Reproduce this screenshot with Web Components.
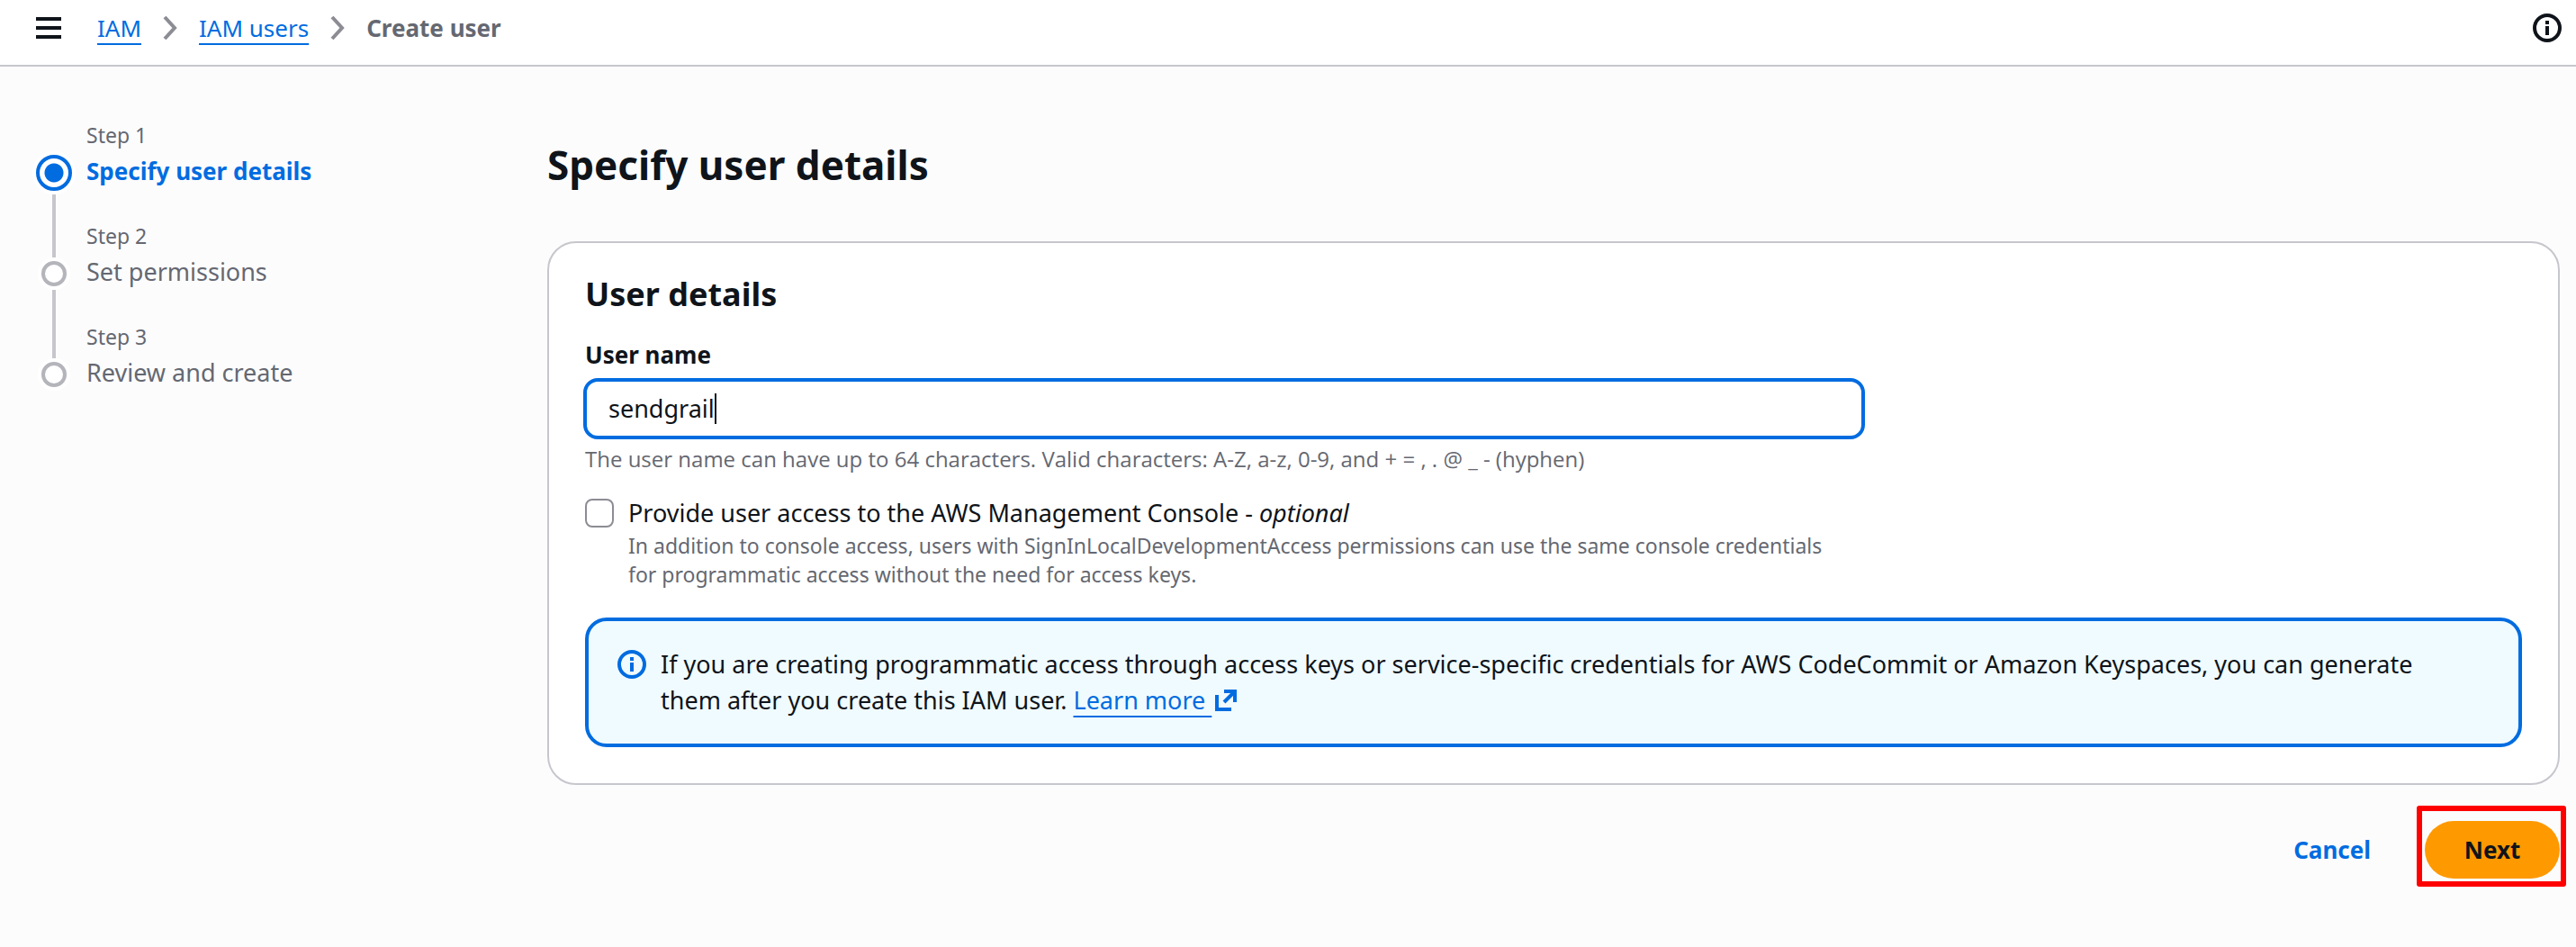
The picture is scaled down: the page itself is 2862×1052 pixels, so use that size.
<!DOCTYPE html>
<html lang="en">
<head>
<meta charset="utf-8">
<title>Create user</title>
<style>
  :root {
    --link: #006ce0;
    --text: #0f141a;
    --muted: #656871;
    --divider: #c6c6cd;
    --body-size: 27px;
    --strong-size: 26px;
    --small-size: 23px;
  }
  body {
    margin: 0;
    min-height: 100vh;
    background: #fcfcfd;
    color: var(--text);
    font: 400 var(--body-size)/40px "Noto Sans", "Open Sans", sans-serif;
  }
</style>
</head>
<body>
<iam-create-user></iam-create-user>

<script>
const define = (name, html) => {
  const template = document.createElement('template');
  template.innerHTML = html;
  customElements.define(name, class extends HTMLElement {
    connectedCallback() {
      if (this.shadowRoot) return;
      this.attachShadow({ mode: 'open' }).append(template.content.cloneNode(true));
    }
  });
};

define('icon-info', `
  <style>
    :host { display: block; flex: none; width: 32px; height: 32px; }
    svg { display: block; width: 100%; height: 100%; }
  </style>
  <svg viewBox="0 0 16 16" fill="none" stroke="currentColor" stroke-width="2" aria-hidden="true">
    <circle cx="8" cy="8" r="7"/><path d="M8 4v2M8 7v5"/>
  </svg>`);

define('icon-external', `
  <style>
    :host { display: inline-block; width: 24px; height: 24px; vertical-align: -2px; }
    svg { display: block; width: 100%; height: 100%; }
  </style>
  <svg viewBox="0 0 24 24" fill="none" stroke="currentColor" stroke-width="4" aria-hidden="true">
    <path d="M10 2h12v12M22 2L10 14M2 6v16h16"/>
  </svg>`);

define('app-breadcrumbs', `
  <style>
    :host { display: block; }
    ol { display: flex; align-items: center; margin: 0; padding: 0; list-style: none; font-size: var(--strong-size); }
    li { display: flex; align-items: center; }
    a { color: var(--link); text-decoration: underline 2px; text-underline-offset: 7px; }
    span { color: var(--muted); font-weight: 700; }
    svg { width: 16px; height: 26px; margin: 0 24px; fill: none; stroke: #8c8c94; stroke-width: 4; }
  </style>
  <nav aria-label="Breadcrumbs"><ol>
    <li><a href="#iam">IAM</a><svg viewBox="0 0 16 26" aria-hidden="true"><path d="M2 1l11 12L2 25"/></svg></li>
    <li><a href="#users">IAM users</a><svg viewBox="0 0 16 26" aria-hidden="true"><path d="M2 1l11 12L2 25"/></svg></li>
    <li><span aria-current="page">Create user</span></li>
  </ol></nav>`);

define('app-topbar', `
  <style>
    :host { display: flex; align-items: center; gap: 40px; padding: 11px 16px 21px 40px; background: #fff; border-bottom: 2px solid var(--divider); }
    button { display: block; padding: 0; border: 0; background: none; color: var(--text); }
    .menu svg { display: block; width: 28px; height: 24px; }
    .info { margin-left: auto; }
  </style>
  <button class="menu" type="button" aria-label="Open navigation">
    <svg viewBox="0 0 28 24" fill="none" stroke="currentColor" stroke-width="4"><path d="M0 2h28M0 12h28M0 22h28"/></svg>
  </button>
  <app-breadcrumbs></app-breadcrumbs>
  <button class="info" type="button" aria-label="Info"><icon-info></icon-info></button>`);

define('wizard-step', `
  <style>
    :host { display: grid; grid-template-columns: 40px 1fr; column-gap: 16px; min-height: 112px; color: var(--muted); }
    .rail { display: flex; flex-direction: column; align-items: center; }
    .rail i { width: 4px; background: var(--divider); }
    .before { height: 40px; }
    .after { flex: 1; }
    .dot { box-sizing: border-box; width: 28px; height: 28px; margin: 4px 0; border: 4px solid #b4b4bb; border-radius: 50%; background: #fff; box-shadow: 0 0 0 4px #fff; }
    .label { font-size: var(--small-size); line-height: 32px; margin-bottom: 4px; }
    .title { font-size: var(--body-size); }
    :host([active]) .title { color: var(--link); font-weight: 700; font-size: var(--strong-size); }
    :host([active]) .dot { width: 40px; height: 40px; border-color: var(--link); background: radial-gradient(circle, var(--link) 10px, #fff 11px); }
    :host([active]) .before { height: 34px; background: none; }
    :host([last]) .after { background: none; }
  </style>
  <div class="rail"><i class="before"></i><b class="dot"></b><i class="after"></i></div>
  <div><div class="label"><slot name="label"></slot></div><div class="title"><slot></slot></div></div>`);

define('wizard-steps', `
  <style>
    :host { display: block; flex: none; box-sizing: border-box; width: 608px; padding: 60px 40px 0; }
  </style>
  <nav aria-label="Steps">
    <wizard-step active><span slot="label">Step 1</span>Specify user details</wizard-step>
    <wizard-step><span slot="label">Step 2</span>Set permissions</wizard-step>
    <wizard-step last><span slot="label">Step 3</span>Review and create</wizard-step>
  </nav>`);

define('user-name-field', `
  <style>
    :host { display: block; }
    label { display: block; font-weight: 700; font-size: var(--strong-size); }
    .box { display: flex; align-items: center; box-sizing: border-box; height: 68px; margin: 6px -2px; padding: 0 24px; border: 4px solid var(--link); border-radius: 16px; background: #fff; }
    input { field-sizing: content; max-width: 100%; padding: 0; border: 0; outline: 0; background: none; color: inherit; font: inherit; }
    .caret { width: 2px; height: 34px; background: var(--text); }
    p { margin: 0; font-size: 24px; line-height: 32px; color: var(--muted); font-family: "Open Sans", "Noto Sans", sans-serif; }
  </style>
  <label for="name">User name</label>
  <div class="box"><input id="name" type="text" value="sendgrail" aria-describedby="hint"><span class="caret"></span></div>
  <p id="hint">The user name can have up to 64 characters. Valid characters: A-Z, a-z, 0-9, and + = , . @ _ - (hyphen)</p>`);

define('console-access-option', `
  <style>
    :host { display: flex; gap: 16px; padding-right: 32px; }
    input { appearance: none; flex: none; box-sizing: border-box; width: 32px; height: 32px; margin: 4px 0; border: 2px solid #8c8c94; border-radius: 8px; background: #fff; }
    label { display: block; }
    p { margin: 0; font-size: var(--small-size); line-height: 32px; color: var(--muted); }
  </style>
  <input id="console" type="checkbox" aria-describedby="about">
  <div>
    <label for="console">Provide user access to the AWS Management Console - <em>optional</em></label>
    <p id="about">In addition to console access, users with SignInLocalDevelopmentAccess permissions can use the same console credentials for programmatic access without the need for access keys.</p>
  </div>`);

define('info-alert', `
  <style>
    :host { display: flex; gap: 16px; padding: 28px 60px 28px 32px; border: 4px solid var(--link); border-radius: 24px; background: #f0fbff; }
    icon-info { margin-top: 4px; color: var(--link); }
  </style>
  <icon-info></icon-info>
  <div><slot></slot></div>`);

define('user-details-card', `
  <style>
    :host { display: block; padding: 32px 40px 40px; border: 2px solid var(--divider); border-radius: 32px; background: #fff; }
    h2 { margin: 0 0 22px; font-size: 36px; line-height: 50px; }
    .form { display: grid; gap: 24px; width: 66%; margin-bottom: 32px; }
    a { display: inline-block; color: var(--link); text-decoration: underline 2px; text-underline-offset: 7px; white-space: nowrap; }
    icon-external { margin-left: 4px; }
  </style>
  <h2>User details</h2>
  <div class="form">
    <user-name-field></user-name-field>
    <console-access-option></console-access-option>
  </div>
  <info-alert><span>If you are creating programmatic access through access keys or service-specific credentials for AWS CodeCommit or Amazon Keyspaces, you can generate them after you create this IAM user.</span> <a href="#learn">Learn more&nbsp;<icon-external></icon-external></a></info-alert>`);

define('wizard-actions', `
  <style>
    :host { display: flex; justify-content: flex-end; gap: 20px; }
    button { height: 64px; padding: 0 40px; border: 0; border-radius: 32px; background: none; color: var(--link); font: inherit; font-size: var(--strong-size); font-weight: 700; }
    .primary { position: relative; min-width: 150px; background: #ff9900; color: var(--text); }
    .primary::after { content: ""; position: absolute; inset: -17px -7px -9px -9px; border: 6px solid #f00; border-radius: 3px; }
  </style>
  <button type="button">Cancel</button>
  <button class="primary" type="button">Next</button>`);

define('iam-create-user', `
  <style>
    :host { display: block; }
    .layout { display: flex; }
    main { flex: 1; min-width: 0; padding: 80px 18px 40px 0; }
    h1 { margin: 0 0 56px; font-size: 44px; line-height: 58px; }
    wizard-actions { margin-top: 40px; }
  </style>
  <app-topbar></app-topbar>
  <div class="layout">
    <wizard-steps></wizard-steps>
    <main>
      <h1>Specify user details</h1>
      <form>
        <user-details-card></user-details-card>
        <wizard-actions></wizard-actions>
      </form>
    </main>
  </div>`);
</script>
</body>
</html>
